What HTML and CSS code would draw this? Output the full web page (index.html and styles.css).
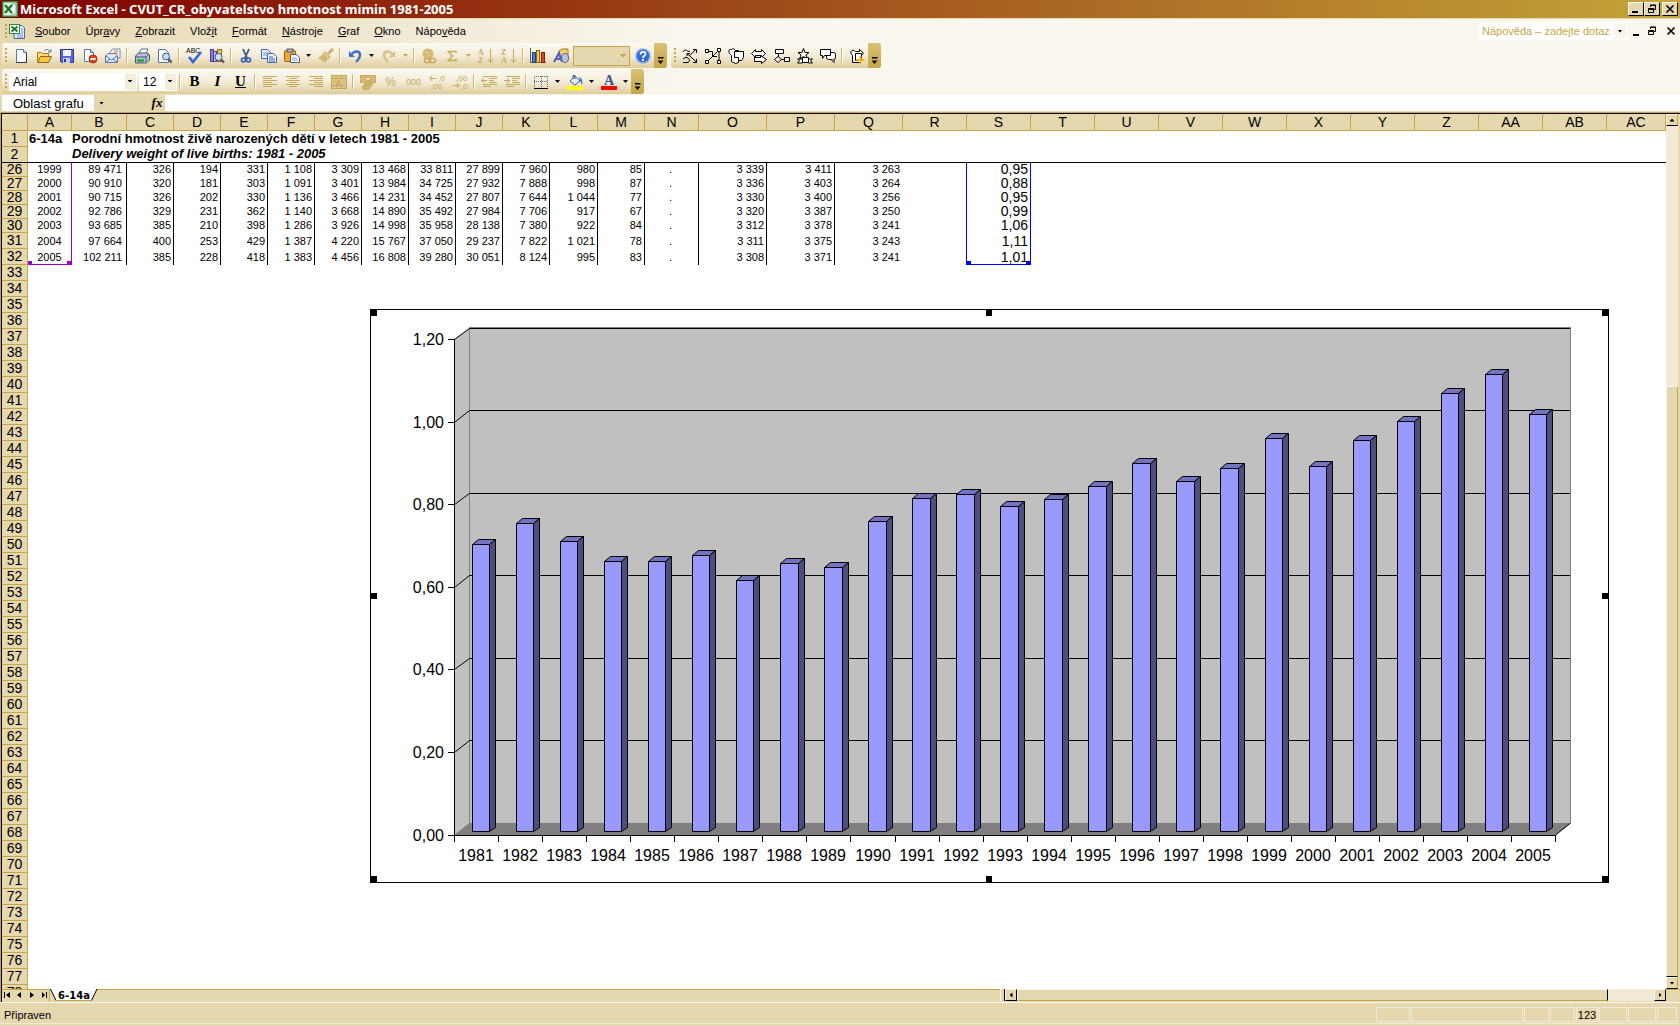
FILE: index.html
```html
<!DOCTYPE html>
<html lang="cs">
<head>
<meta charset="utf-8">
<title>Microsoft Excel - CVUT_CR_obyvatelstvo hmotnost mimin 1981-2005</title>
<link rel="stylesheet" href="styles.css">
</head>
<body>
<header class="titlebar">
  <svg class="ico" viewBox="0 0 16 16"><rect width="16" height="16" rx="1" fill="#2f8a3c"/><rect x="1.500" y="1.500" width="13" height="13" fill="#e9f3e6"/><path d="M9 3h5v10H9" fill="#fff" stroke="#6fae74"/><path d="M3 4l7 8M10 4l-7 8" stroke="#1c7a2d" stroke-width="2.400"/></svg>
  <h1>Microsoft Excel - CVUT_CR_obyvatelstvo hmotnost mimin 1981-2005</h1>
  <div class="winbtns">
    <button aria-label="Minimalizovat"><svg viewBox="0 0 12 10"><path d="M2 8h6" stroke="#000" stroke-width="2"/></svg></button>
    <button aria-label="Obnovit"><svg viewBox="0 0 12 10"><path d="M4.500 3V1.500h5v4H8M2.500 5.500h5v3h-5zM2 4.500h6M4 1h6" fill="none" stroke="#000"/></svg></button>
    <button class="close" aria-label="Zavřít"><svg viewBox="0 0 12 10"><path d="M2.500 1.500l7 7M9.500 1.500l-7 7" stroke="#000" stroke-width="1.600"/></svg></button>
  </div>
</header>

<div class="chrome">
  <nav class="menubar">
    <span class="grip"></span>
    <svg class="ico docico" viewBox="0 0 16 16"><path d="M5 2.500h8l2.500 2.500v10.500H5z" fill="#dce8fb" stroke="#4568a8"/><path d="M8 12h6M8 14h6M12 6h2M12 8h2M12 10h2" stroke="#7d9bd0"/><rect x=".5" y="1.500" width="10" height="9" fill="#fff" stroke="#2f8a3c"/><path d="M2.500 3.500l6 5M8.500 3.500l-6 5" stroke="#1c7a2d" stroke-width="2"/></svg>
    <div class="menus">
      <button><u>S</u>oubor</button><button>Úpr<u>a</u>vy</button><button><u>Z</u>obrazit</button><button>Vlož<u>i</u>t</button><button><u>F</u>ormát</button><button><u>N</u>ástroje</button><button><u>G</u>raf</button><button><u>O</u>kno</button><button>Nápo<u>v</u>ěda</button>
    </div>
    <label class="ask"><input type="text" placeholder="Nápověda – zadejte dotaz" aria-label="Nápověda"><span class="askarrow"><i class="dn"></i></span></label>
    <div class="docbtns">
      <button aria-label="Minimalizovat sešit"><svg viewBox="0 0 12 10"><path d="M3 9h6" stroke="#000" stroke-width="2"/></svg></button>
      <button aria-label="Obnovit sešit"><svg viewBox="0 0 12 10"><path d="M4.500 3V1.500h5v4H8M2.500 5.500h5v3h-5zM2 4.500h6M4 1h6" fill="none" stroke="#000"/></svg></button>
      <button class="close" aria-label="Zavřít sešit"><svg viewBox="0 0 12 10"><path d="M2.500 1.500l7 7M9.500 1.500l-7 7" stroke="#000" stroke-width="1.600"/></svg></button>
    </div>
  </nav>

  <div class="bars">
    <div class="toolbar">
      <span class="grip"></span>
      <button aria-label="Nový"><svg class="ico" viewBox="0 0 16 16"><path d="M3.500 1.500h7l3 3v10h-10z" fill="#fff" stroke="#5a76a8"/><path d="M13.500 4.500v10h-10" fill="none" stroke="#20355e"/><path d="M10.500 1.500v3h3" fill="#c9d8f0" stroke="#5a76a8"/></svg></button>
      <button aria-label="Otevřít"><svg class="ico" viewBox="0 0 16 16"><path d="M1.500 13.500v-9h4l1 1h6v3" fill="#f6d874" stroke="#a87a1c"/><path d="M1.500 14.500l3-6h11l-3 6z" fill="#fbc440" stroke="#8f6516"/><path d="M8 3c2-2.500 5-2 6 1M12 4h3V1" fill="none" stroke="#5c7ba8"/></svg></button>
      <button aria-label="Uložit"><svg class="ico" viewBox="0 0 16 16"><path d="M1.500 1.500h13v13h-12l-1-1z" fill="#5a66d8" stroke="#2c2f96"/><rect x="4" y="2" width="8" height="6" fill="#eef2fc"/><rect x="4" y="10" width="7" height="5" fill="#c5cbe8"/><rect x="5" y="11" width="2" height="3" fill="#2c2f96"/></svg></button>
      <button aria-label="Oprávnění"><svg class="ico" viewBox="0 0 16 16"><path d="M2.500 1.500h6l3 3v9h-9z" fill="#fff" stroke="#5a76a8"/><path d="M8.500 1.500v3h3" fill="#c9d8f0" stroke="#5a76a8"/><circle cx="11" cy="11" r="4" fill="#e0441c" stroke="#a82c0c"/><path d="M8.500 11h5" stroke="#fff" stroke-width="2"/></svg></button>
      <button aria-label="E-mail"><svg class="ico" viewBox="0 0 16 16"><path d="M4.500 5l3-4h7.500v9H6z" fill="#fff" stroke="#7288ac"/><path d="M9 3h4M9 5h4" stroke="#e06a3a"/><path d="M.5 7.500l3-2h7l2 2v7H.5z" fill="#dfe8f6" stroke="#5a76a8"/><path d="M1 8l5.500 4L12 8M1 14l4-3M12 14l-4-3" fill="none" stroke="#5a76a8"/></svg></button>
      <span class="sep"></span>
      <button aria-label="Tisk"><svg class="ico" viewBox="0 0 16 16"><path d="M5 6l2-5h7l-2 5z" fill="#fff" stroke="#5f7498"/><path d="M1.500 8l3-3h9l2 2v5l-3 3h-11z" fill="#b9c4d8" stroke="#44546e"/><path d="M2 9h10l3-3M12 9v5" fill="none" stroke="#44546e"/><path d="M3 12.500h7" stroke="#1fa32e" stroke-width="2.400"/></svg></button>
      <button aria-label="Náhled"><svg class="ico" viewBox="0 0 16 16"><path d="M1.500 1.500h7l3 3v10h-10z" fill="#fff" stroke="#5a76a8"/><circle cx="9" cy="8.500" r="3.500" fill="#bfe0f5" stroke="#3f5c8c"/><path d="M11.500 11l3 3.500" stroke="#54545c" stroke-width="2.400"/></svg></button>
      <span class="sep"></span>
      <button aria-label="Pravopis"><svg class="ico" viewBox="0 0 16 16"><text x="0" y="5" font-family="Liberation Sans, sans-serif" font-size="7">ABC</text><path d="M3 9l4 5 8-10" fill="none" stroke="#2f6bd8" stroke-width="2.600"/></svg></button>
      <button aria-label="Zdroje informací"><svg class="ico" viewBox="0 0 16 16"><rect x="1.500" y="1.500" width="3" height="12" fill="#8a7fd6" stroke="#4a3f9a"/><rect x="4.500" y="3.500" width="3" height="10" fill="#c9b0e6" stroke="#4a3f9a"/><rect x="8.500" y="1.500" width="4" height="12" fill="#e8c85a" stroke="#8f6516"/><circle cx="9.500" cy="9" r="3.500" fill="#cfe6f7" stroke="#3f5c8c"/><path d="M12 11.500l3 3" stroke="#54545c" stroke-width="2.400"/></svg></button>
      <span class="sep"></span>
      <button aria-label="Vyjmout"><svg class="ico" viewBox="0 0 16 16"><path d="M5 1l4 9M11 1L7 10" stroke="#40587e" stroke-width="1.800"/><circle cx="5.500" cy="12" r="2" fill="none" stroke="#2c5fc0" stroke-width="1.600"/><circle cx="10.500" cy="12" r="2" fill="none" stroke="#2c5fc0" stroke-width="1.600"/></svg></button>
      <button aria-label="Kopírovat"><svg class="ico" viewBox="0 0 16 16"><path d="M.5 1.500h6l3 3v6h-9z" fill="#e8f0fc" stroke="#3f66b0"/><path d="M2 5h5M2 7h5" stroke="#7d9bd0"/><path d="M6.500 5.500h6l3 3v6h-9z" fill="#e8f0fc" stroke="#3f66b0"/><path d="M8 9h4M8 11h6M8 13h6" stroke="#3f66b0"/></svg></button>
      <button aria-label="Vložit"><svg class="ico" viewBox="0 0 16 16"><rect x=".5" y="2.500" width="11" height="11" rx="1" fill="#f2a92e" stroke="#8f6516"/><rect x="3" y="1" width="6" height="3" fill="#b8b8c0" stroke="#5a5a66"/><path d="M6.500 6.500h6l3 3v5h-9z" fill="#fff" stroke="#4a5a80"/><path d="M8 10h5M8 12h6" stroke="#7d9bd0"/></svg></button>
      <button class="drop" aria-label="Možnosti vložení"><i class="dn"></i></button>
      <button aria-label="Kopírovat formát"><svg class="ico" viewBox="0 0 16 16"><path d="M15 1l-5 5" stroke="#cdb06a" stroke-width="3"/><path d="M7 4l5 5-2 2-5-5z" fill="#e0cb92" stroke="#c8a95c"/><path d="M5 6l5 5-3 4-7-5z" fill="#d3b878"/></svg></button>
      <span class="sep"></span>
      <button aria-label="Zpět"><svg class="ico" viewBox="0 0 16 16"><path d="M5 6c3-4 8-3 8 1 0 3-2 5-4 7" fill="none" stroke="#3a6fd0" stroke-width="2.400"/><path d="M2 3v6h6z" fill="#3a6fd0"/></svg></button>
      <button class="drop" aria-label="Seznam zpět"><i class="dn"></i></button>
      <button aria-label="Znovu"><svg class="ico" viewBox="0 0 16 16"><path d="M11 6C8 2 3 3 3 7c0 3 2 5 4 7" fill="none" stroke="#d8c086" stroke-width="2.400"/><path d="M14 3v6H8z" fill="#d8c086"/></svg></button>
      <button class="drop" aria-label="Seznam znovu"><i class="dn off"></i></button>
      <span class="sep"></span>
      <button aria-label="Hypertextový odkaz"><svg class="ico" viewBox="0 0 16 16"><circle cx="7" cy="6" r="5.500" fill="#d3b878"/><path d="M3 5c2-2 3 2 5-1M5 9l4-2" stroke="#e8d8ac" fill="none"/><rect x="3.500" y="10.500" width="6" height="4" rx="2" fill="none" stroke="#c8a95c" stroke-width="1.600"/><rect x="8.500" y="10.500" width="6" height="4" rx="2" fill="none" stroke="#c8a95c" stroke-width="1.600"/></svg></button>
      <button aria-label="Automatické shrnutí"><svg class="ico" viewBox="0 0 16 16"><path d="M12 5V3.500H4.500L8.500 8l-4 4.500H12V11" fill="none" stroke="#c8a95c" stroke-width="1.600"/></svg></button>
      <button class="drop" aria-label="Funkce"><i class="dn off"></i></button>
      <button aria-label="Seřadit vzestupně"><svg class="ico sort" viewBox="0 0 16 16"><text x="0" y="7">A</text><text x="0" y="15">Z</text><path d="M12.500 1v13M10 11l2.500 3.500L15 11"/></svg></button>
      <button aria-label="Seřadit sestupně"><svg class="ico sort" viewBox="0 0 16 16"><text x="0" y="7">Z</text><text x="0" y="15">A</text><path d="M12.500 1v13M10 11l2.500 3.500L15 11"/></svg></button>
      <span class="sep"></span>
      <button aria-label="Průvodce grafem"><svg class="ico" viewBox="0 0 16 16"><path d="M.5 0v14.500H16" fill="none" stroke="#5a5a66"/><rect x="2.500" y="4.500" width="3" height="10" fill="#4a7be0" stroke="#20407e"/><rect x="6.500" y="2.500" width="3" height="12" fill="#f4ce4a" stroke="#8f6516"/><rect x="11.500" y="4.500" width="3" height="10" fill="#e0441c" stroke="#80220a"/></svg></button>
      <button aria-label="Kreslení"><svg class="ico" viewBox="0 0 16 16"><path d="M6 3l3-2h6v6l-3 2H6z" fill="#f2cf72" stroke="#a87a1c"/><ellipse cx="12" cy="10" rx="3.500" ry="4.500" fill="#b9c4d8" stroke="#55688c"/><path d="M1 14L6 5l3 9M3 11h5" fill="none" stroke="#5060c0" stroke-width="2"/></svg></button>
      <select class="zoombox" aria-label="Lupa" disabled><option></option></select>
      <button aria-label="Nápověda"><svg class="ico" viewBox="0 0 16 16"><circle cx="8" cy="8" r="7" fill="#2f6be0" stroke="#8fb0ea" stroke-width="1.600"/><path d="M5.500 6.500c0-3.500 5-3.500 5-.5C10.500 8 8 7.500 8 10" fill="none" stroke="#fff" stroke-width="1.800"/><rect x="7" y="11" width="2" height="2" fill="#fff"/></svg></button>
      <button class="more" aria-label="Možnosti panelu"><i class="dn"></i></button>
    </div>
    <div class="toolbar outline">
      <span class="grip"></span>
      <button aria-label="Čáry"><svg class="ico" viewBox="0 0 16 16"><path class="open" d="M1 4c3-5 4 1 7-1M15 14.500L5 5.500M14.500 11v3.500H11M5 8V5.500h3M7 8l7-6.500M11 1.500h3.500V5M1 14.500h5c3-2 1-5-2-5M1 11l3-2"/></svg></button>
      <button aria-label="Spojnice"><svg class="ico" viewBox="0 0 16 16"><path class="open" d="M3 3.500h4.500v5H12M14 4v8M3 13l9-9"/><path d="M.5 1.500h3v3h-3zM12.500.5h3v3h-3zM12.500 12.500h3v3h-3zM.5 12.500h3v3h-3z"/></svg></button>
      <button aria-label="Základní tvary"><svg class="ico" viewBox="0 0 16 16"><path d="M3.500 7.500c-4-3-3-7 0-6 1-1 3-1 4 1h3v12l-3 1-4-2z"/><path d="M6.500 3.500h9v6l-2 3h-3v-3h-4z"/></svg></button>
      <button aria-label="Plné šipky"><svg class="ico" viewBox="0 0 16 16"><path d="M.5 5.500l4-4v2h6v-2l4 4-4 4v-2h-6v2z"/><path d="M3.500 9.500h6v-2l6 4-5 4v-2h-7z"/></svg></button>
      <button aria-label="Vývojové diagramy"><svg class="ico" viewBox="0 0 16 16"><path d="M1.500 1.500h8v4h-8zM4.500 6v3M4 8.500l3.500 3-3.500 3-3.500-3zM10.500 9.500h5v4h-5zM7 11.500h3"/></svg></button>
      <button aria-label="Hvězdy a nápisy"><svg class="ico" viewBox="0 0 16 16"><path d="M5.500 11H.5l2 2-2 2h5M11.500 11h4l-2 2 2 2h-4"/><path d="M6.500.5l1.500 4h4L9 7l1.500 4-4-2.500-4 2.500L4 7 1 4.500h4z"/><path d="M5.500 9.500h6v5h-6z"/></svg></button>
      <button aria-label="Popisky"><svg class="ico" viewBox="0 0 16 16"><rect x="6.500" y="4.500" width="9" height="7" rx="2"/><path d="M11 11.500l3 3v-3"/><path d="M.5 1.500h10v6h-6l-2 3v-3h-2z"/></svg></button>
      <span class="sep"></span>
      <button aria-label="Další tvary"><svg class="ico" viewBox="0 0 16 16"><path d="M3.500 14.500v-7c-4-4 0-7 3-4h4V1.500l4 3.500-3 3v6.500z"/><path d="M6.500 5.500h6v5l-3 2h-3z"/><path class="plus" d="M11.500 8v8M7.500 12h8"/></svg></button>
      <button class="more" aria-label="Možnosti panelu"><i class="dn"></i></button>
    </div>
  </div>

  <div class="bars">
    <div class="toolbar">
      <span class="grip"></span>
      <select class="font" aria-label="Písmo"><option>Arial</option></select>
      <select class="size" aria-label="Velikost"><option>12</option></select>
      <span class="sep"></span>
      <button class="ltr" aria-label="Tučné"><b>B</b></button>
      <button class="ltr" aria-label="Kurzíva"><b><i>I</i></b></button>
      <button class="ltr" aria-label="Podtržené"><b><u>U</u></b></button>
      <span class="sep"></span>
      <button aria-label="Vlevo"><svg class="ico dim" viewBox="0 0 16 16"><path d="M1 2.500h14M1 4.500h9M1 6.500h14M1 8.500h9M1 10.500h14M1 12.500h9"/></svg></button>
      <button aria-label="Na střed"><svg class="ico dim" viewBox="0 0 16 16"><path d="M1 2.500h14M4 4.500h8M1 6.500h14M4 8.500h8M1 10.500h14M4 12.500h8"/></svg></button>
      <button aria-label="Vpravo"><svg class="ico dim" viewBox="0 0 16 16"><path d="M1 2.500h14M6 4.500h9M1 6.500h14M6 8.500h9M1 10.500h14M6 12.500h9"/></svg></button>
      <button aria-label="Sloučit"><svg class="ico dim" viewBox="0 0 16 16"><rect x=".5" y="1.500" width="15" height="13" fill="#dcc68c"/><path d="M1 4.500h14M1 11.500h14M5.500 2v2M10.500 2v2M5.500 12v2M10.500 12v2M2 8h2M12 8h2"/><text x="5" y="11" font-size="9" font-weight="bold">a</text></svg></button>
      <span class="sep"></span>
      <button aria-label="Měna"><svg class="ico dim" viewBox="0 0 16 16"><rect x=".5" y="1.500" width="15" height="7" fill="#d3b878"/><ellipse cx="8" cy="5" rx="3" ry="2" fill="#e8d8ac"/><ellipse cx="9" cy="9" rx="4" ry="2" fill="#d3b878"/><ellipse cx="8" cy="11" rx="4" ry="2" fill="#d3b878"/><ellipse cx="6" cy="13.500" rx="4" ry="2" fill="#d3b878"/></svg></button>
      <button class="num" aria-label="Procenta">%</button>
      <button class="num small" aria-label="Oddělovač">000</button>
      <button aria-label="Přidat místo"><svg class="ico dim" viewBox="0 0 16 16"><path d="M1 4.500h6M3 2L1 4.500 3 7"/><text x="9" y="7" font-size="8">,0</text><text x="2" y="15" font-size="8">,00</text></svg></button>
      <button aria-label="Odebrat místo"><svg class="ico dim" viewBox="0 0 16 16"><path d="M1 11.500h6M5 9l2 2.500L5 14"/><text x="4" y="7" font-size="8">,00</text><text x="9" y="15" font-size="8">,0</text></svg></button>
      <span class="sep"></span>
      <button aria-label="Zmenšit odsazení"><svg class="ico dim" viewBox="0 0 16 16"><path d="M2 2.500h14M8 4.500h8M8 6.500h5M8 8.500h8M2 10.500h14M2 12.500h8M0 6.500h6M3 4L.5 6.500 3 9"/></svg></button>
      <button aria-label="Zvětšit odsazení"><svg class="ico dim" viewBox="0 0 16 16"><path d="M2 2.500h14M8 4.500h8M8 6.500h5M8 8.500h8M2 10.500h14M2 12.500h8M0 6.500h6M3 4l2.500 2.500L3 9"/></svg></button>
      <span class="sep"></span>
      <button aria-label="Ohraničení"><svg class="ico" viewBox="0 0 16 16"><path d="M1.500 2v11M8.500 2v11M14.500 2v11M1 2.500h14M1 7.500h14" stroke="#55688c" stroke-dasharray="1 1"/><path d="M1 14.500h14" stroke="#000"/></svg></button>
      <button class="drop" aria-label="Styly ohraničení"><i class="dn"></i></button>
      <button aria-label="Barva výplně"><svg class="ico" viewBox="0 0 16 16"><path d="M3 7l5-5 5 5-5 4z" fill="#dfe8f6" stroke="#3f5c8c"/><path d="M6 5V1.500h2V5" fill="none" stroke="#3f5c8c"/><path d="M12 3c3 1 4 4 3 8l-2-4z" fill="#3f7bd0"/><rect y="12" width="16" height="4" fill="#ff0"/></svg></button>
      <button class="drop" aria-label="Barvy výplně"><i class="dn"></i></button>
      <button aria-label="Barva písma"><svg class="ico" viewBox="0 0 16 16"><text x="3" y="11" font-family="Liberation Serif, serif" font-weight="bold" font-size="14" fill="#33508c">A</text><rect y="12" width="16" height="4" fill="#f00"/></svg></button>
      <button class="drop" aria-label="Barvy písma"><i class="dn"></i></button>
      <button class="more" aria-label="Možnosti panelu"><i class="dn"></i></button>
    </div>
  </div>
</div>

<div class="formulabar">
  <input class="namebox" aria-label="Pole názvů" value="Oblast grafu">
  <button class="namedrop" aria-label="Názvy"><i class="dn"></i></button>
  <button class="fx" aria-label="Vložit funkci"><i>fx</i></button>
  <input class="formula" aria-label="Řádek vzorců">
</div>

<main class="workbook">
  <div class="pane">
    <table class="sheet">
      <colgroup id="cols"></colgroup>
      <thead><tr id="letters"></tr></thead>
      <tbody id="rows">
        <tr class="t1"><th>1</th><td>6-14a</td><td colspan="28">Porodní hmotnost živě narozených dětí v letech 1981 - 2005</td></tr>
        <tr class="t2"><th>2</th><td></td><td colspan="28">Delivery weight of live births: 1981 - 2005</td></tr>
      </tbody>
    </table>
    <svg class="chart" viewBox="370 309 1239 574" width="1239" height="574" role="img" aria-label="Sloupcový graf">
      <rect x="370.500" y="309.500" width="1238" height="573" fill="#fff" stroke="#000"/>
      <path d="M454 339L469 328V823L454 835z" fill="#c0c0c0"/>
      <rect x="469" y="327" width="1102" height="496" fill="#c0c0c0"/>
      <path d="M454 835L469 823H1571L1556 835z" fill="#808080"/>
      <path d="M469.500 823V327.500H1570.500V823" fill="none" stroke="#808080"/>
      <path d="M1555.500 835L1570.500 823" stroke="#000"/>
      <g id="plot"></g>
      <path d="M370 309h7v7h-7zM986 309h6v7h-6zM1602 309h7v7h-7zM370 593h7v6h-7zM1602 593h7v6h-7zM370 876h7v7h-7zM986 876h6v7h-6zM1602 876h7v7h-7z"/>
    </svg>
  </div>
  <div class="vscroll">
    <button aria-label="Nahoru"><i class="tri u"></i></button>
    <div class="vtrack"></div>
    <div class="vthumb"></div>
    <button aria-label="Dolů"><i class="tri d"></i></button>
  </div>
</main>

<div class="tabs">
  <div class="tabnav">
    <button aria-label="První list"><svg viewBox="0 0 12 12"><path d="M2.500 3v6" stroke="#000"/><path d="M8 3v6L4 6z"/></svg></button>
    <button aria-label="Předchozí list"><svg viewBox="0 0 12 12"><path d="M7 3v6L3 6z"/></svg></button>
    <button aria-label="Další list"><svg viewBox="0 0 12 12"><path d="M4 3v6l4-3z"/></svg></button>
    <button aria-label="Poslední list"><svg viewBox="0 0 12 12"><path d="M8.500 3v6" stroke="#000"/><path d="M4 3v6l3-3z"/></svg></button>
  </div>
  <button class="tab"><svg viewBox="0 0 48 13" aria-hidden="true"><path d="M0 0L6 11H41L47 0z" fill="#fff"/><path d="M0.500 0L6 11.500M41.500 11.500L47 0" stroke="#000" fill="none"/><path d="M6 11.500h35" stroke="#c6a646"/></svg><span>6-14a</span></button>
  <div class="hscroll">
    <span class="split"></span>
    <button aria-label="Vlevo"><i class="tri l"></i></button>
    <div class="hthumb"></div>
    <div class="htrack"></div>
    <button aria-label="Vpravo"><i class="tri r"></i></button>
  </div>
</div>

<footer class="status">
  <span class="ready">Připraven</span>
  <span class="f w34"></span><span class="f w112"></span><span class="f w25"></span><span class="f w25"></span><span class="f w22">123</span><span class="f w28"></span><span class="f w28"></span><span class="f w20"></span>
</footer>
<script src="sheet.js"></script>
</body>
</html>
```
FILE: styles.css
```css
* { box-sizing: border-box; }
html, body { height: 100%; }
body {
  margin: 0;
  display: flex;
  flex-direction: column;
  overflow: hidden;
  background: #e5d7ae;
  font: 11px "Liberation Sans", Arial, sans-serif;
  color: #000;
}
button, input, select {
  font: inherit;
  color: inherit;
  border: 0;
  margin: 0;
  padding: 0;
  background: none;
  border-radius: 0;
  appearance: none;
  outline: 0;
}
button { display: flex; align-items: center; justify-content: center; flex: none; }
svg { display: block; }
.ico { width: 16px; height: 16px; flex: none; }

/* title bar */
.titlebar {
  flex: none;
  height: 18px;
  display: flex;
  align-items: center;
  padding: 0 2px;
  background: linear-gradient(90deg, #800000, #c4a438);
}
.titlebar h1 {
  margin: 0 0 0 2px;
  flex: 1;
  font: bold 13px/18px "Noto Sans", "DejaVu Sans", sans-serif;
  color: #fff;
  white-space: nowrap;
}
.winbtns { display: flex; }
.winbtns button {
  width: 16px;
  height: 14px;
  background: #e5d7ae;
  border: 1px solid;
  border-color: #f9f6ee #000 #000 #f9f6ee;
}
.winbtns .close { margin-left: 2px; }
.winbtns svg, .docbtns svg { width: 12px; height: 10px; }

/* menu and toolbars */
.chrome {
  flex: none;
  border-top: 1px solid #e5d7ae;
  background: linear-gradient(90deg, #e5d7ae, #f9f6ee 680px);
}
.menubar { height: 24px; display: flex; align-items: center; padding-left: 3px; }
.grip {
  width: 7px;
  height: 15px;
  flex: none;
  background: repeating-linear-gradient(#c6a646 0 2px, transparent 2px 4px) 3px 0 / 2px 100% no-repeat;
}
.menubar .grip { width: 6px; background-position-x: 2px; }
.docico { margin-right: 2px; }
.menus { display: flex; flex: 1; }
.menus button { padding: 0 7px 0 8px; height: 20px; white-space: pre; }
.ask { display: flex; width: 148px; height: 18px; padding: 1px; background: #fff; }
.ask input { flex: 1; min-width: 0; padding-left: 2px; }
.ask input::placeholder { color: #c6a646; opacity: 1; }
.askarrow { width: 12px; display: flex; align-items: center; justify-content: center; background: #f9f6ee; }
.docbtns { display: flex; gap: 4px; padding: 0 3px; }
.docbtns .close { margin-left: 3px; }
.bars { display: flex; gap: 4px; padding: 0 2px 1px; }
.toolbar {
  display: flex;
  align-items: center;
  height: 25px;
  border-radius: 3px;
  background: linear-gradient(#fbf9f2, #f3ecd8 50%, #dfcd9c);
}
.toolbar button { width: 23px; height: 23px; }
.toolbar .drop { width: 11px; }
.toolbar .more {
  width: 13px;
  height: 25px;
  align-items: flex-end;
  padding-bottom: 4px;
  border-radius: 0 3px 3px 0;
  background: linear-gradient(#d8c078, #c6a646);
}
.sep { width: 6px; height: 15px; flex: none; background: linear-gradient(90deg, transparent 2px, #d3b96c 2px 3px, #fff 3px 4px, transparent 4px); }
.dn { width: 5px; height: 3px; background: #000; clip-path: polygon(0 0, 100% 0, 50% 100%); }
.more .dn { width: 6px; height: 7px; clip-path: polygon(0 0, 100% 0, 100% 20%, 0 20%, 0 50%, 100% 50%, 50% 100%, 0 50%); }
.dn.off { background: #c6a646; }
.sort text { font: bold 8px "Liberation Serif", serif; fill: #c8a95c; }
.sort path { fill: none; stroke: #c8a95c; }
.dim { fill: none; stroke: #c8a95c; }
.dim text { fill: #c8a95c; stroke: none; font-family: "Liberation Sans", sans-serif; }
.outline path, .outline rect { fill: #fff; stroke: #000; }
.outline .open { fill: none; }
.outline .plus { stroke: #f0b020; stroke-width: 2; }
.toolbar select {
  height: 18px;
  padding: 0 4px;
  background-color: #fff;
  background-image: conic-gradient(from -45deg at 50% 100%, #000 90deg, transparent 0), linear-gradient(#f3ecd8, #f3ecd8);
  background-position: right 4px center, right 1px center;
  background-size: 6px 3px, 11px 16px;
  background-repeat: no-repeat;
}
.toolbar .font { width: 128px; margin-right: 2px; font-size: 12px; }
.toolbar .size { width: 38px; font-size: 12px; }
.toolbar .zoombox {
  width: 57px;
  height: 20px;
  margin: 0 1px;
  border: 1px solid #c6a646;
  background-color: #e5d7ae;
  background-image: conic-gradient(from -45deg at 50% 100%, #c6a646 90deg, transparent 0);
  background-size: 6px 3px;
  background-position: right 3px center;
  opacity: 1;
}
.toolbar .ltr { font-family: "Liberation Serif", serif; font-size: 15px; }
.toolbar .num { color: #c8a95c; font-size: 12px; }
.toolbar .small { font-size: 9px; }

/* formula bar */
.formulabar { flex: none; height: 17px; display: flex; padding-left: 2px; border-bottom: 1px solid #e5d7ae; }
.namebox { width: 92px; padding-left: 11px; background: #fff; font-size: 13px; }
.namedrop { width: 15px; }
.fx { width: 56px; padding-left: 40px; font: bold 13px "Liberation Serif", serif; }
.formula { flex: 1; min-width: 0; background: #fff; }

/* worksheet */
.workbook {
  flex: 1;
  min-height: 0;
  display: flex;
  border-top: 1px solid #c6a646;
  border-left: 1px solid #c6a646;
  box-shadow: inset 1px 1px 0 #000;
  padding: 1px 2px 0 1px;
}
.pane { position: relative; flex: 1; min-width: 0; overflow: hidden; background: #fff; }
.sheet { width: 100%; table-layout: fixed; border-collapse: separate; border-spacing: 0; }
.sheet th {
  height: 16px;
  padding: 0;
  background: #e5d7ae;
  border-right: 1px solid #c6a646;
  border-bottom: 1px solid #c6a646;
  font: 14px/15px "Liberation Sans", Arial, sans-serif;
}
.sheet thead th { height: 17px; line-height: 16px; }
.sheet td { height: 16px; padding: 0 3px 1px 0; line-height: 14px; text-align: right; vertical-align: bottom; white-space: nowrap; }
.sheet .short th, .sheet .short td { height: 14px; line-height: 13px; }
.sheet .ln { border-right: 1px solid #000; padding-right: 2px; }
.sheet .mid { text-align: center; }
.sheet .colA { text-align: center; padding-right: 0; border-right: 1px solid #9900cc; }
.sheet .colB { padding-right: 4px; }
.sheet .colR { border-right: 1px solid #00f; }
.sheet .colS { border-right: 1px solid #00f; padding-right: 2px; font-size: 14px; }
.sheet .last .colA, .sheet .last .colS {
  padding-bottom: 0;
  border-bottom: 1px solid;
  background-repeat: no-repeat;
  background-size: 4px 3px;
  background-position: left bottom, right bottom;
}
.sheet .last .colA { border-bottom-color: #9900cc; background-image: linear-gradient(#9900cc, #9900cc), linear-gradient(#9900cc, #9900cc); }
.sheet .last .colS { border-bottom-color: #00f; background-image: linear-gradient(#00f, #00f), linear-gradient(#00f, #00f); }
.t1 td, .t2 td { font-weight: bold; font-size: 13px; }
.sheet .t1 td, .sheet .t2 td { text-align: left; padding: 0 0 1px; }
.sheet .t2 td { font-style: italic; }
.sheet .t2 th, .sheet .t2 td { border-bottom: 1px solid #000; }
.sheet .t1 td:nth-child(2) { padding-left: 1px; }

.chart { position: absolute; left: 368px; top: 195px; }
.chart text { font: 16px "Liberation Sans", Arial, sans-serif; }

/* scroll bars */
.vscroll { width: 12px; flex: none; display: flex; flex-direction: column; background: #f2ead6; }
.vscroll button, .hscroll button {
  width: 12px;
  height: 12px;
  background: #e5d7ae;
  border: 1px solid;
  border-color: #f9f6ee #c6a646 #000 #f9f6ee;
}
.vtrack { flex: 261; }
.vthumb { flex: 590; background: #e5d7ae; border: 1px solid; border-color: #f9f6ee #c6a646 #000 #f9f6ee; }
.tri { background: #000; }
.tri.u, .tri.d { width: 5px; height: 3px; }
.tri.l, .tri.r { width: 3px; height: 5px; }
.tri.u { clip-path: polygon(50% 0, 100% 100%, 0 100%); }
.tri.d { clip-path: polygon(0 0, 100% 0, 50% 100%); }
.tri.l { clip-path: polygon(0 50%, 100% 0, 100% 100%); }
.tri.r { clip-path: polygon(0 0, 100% 50%, 0 100%); }
.tabs {
  flex: none;
  height: 13px;
  display: flex;
  border-left: 1px solid #c6a646;
  box-shadow: inset 1px 0 0 #000, inset 0 1px 0 #c6a646;
  padding-right: 14px;
}
.tabnav { display: flex; width: 49px; padding-left: 1px; border-right: 1px solid #c6a646; }
.tabnav button, .tabnav svg { width: 12px; height: 12px; }
.tab { position: relative; width: 48px; height: 13px; font: bold 10px/12px "DejaVu Sans", sans-serif; }
.tab svg { position: absolute; inset: 0; width: 48px; height: 13px; }
.tab span { position: relative; }
.hscroll { display: flex; width: 40%; height: 12px; margin-left: auto; background: #f2ead6; }
.hscroll button { border-right-color: #000; }
.split { width: 5px; background: #e5d7ae; border-left: 1px solid #f9f6ee; border-right: 1px solid #000; }
.hthumb { flex: 588; background: #e5d7ae; border: 1px solid; border-color: #f9f6ee #000 #c6a646 #f9f6ee; }
.htrack { flex: 46; }

/* status bar */
.status {
  flex: none;
  height: 24px;
  display: flex;
  gap: 1px;
  padding: 4px 3px 4px 4px;
  border-top: 1px solid #f9f6ee;
  background: linear-gradient(#f2ead6, #f2ead6) 0 20px / 100% 1px no-repeat;
}
.ready { flex: 1; line-height: 16px; }
.f { height: 15px; border: 1px solid #f2ead6; line-height: 14px; text-align: center; }
.w34 { width: 34px; }
.w112 { width: 112px; }
.w25 { width: 25px; }
.w22 { width: 22px; }
.w28 { width: 28px; }
.w20 { width: 20px; }
```
FILE: sheet.js
```js
const columns = [
  ["", 26], ["A", 44], ["B", 55], ["C", 47], ["D", 47], ["E", 47], ["F", 47], ["G", 47], ["H", 47],
  ["I", 47], ["J", 47], ["K", 47], ["L", 48], ["M", 47], ["N", 54], ["O", 68], ["P", 68], ["Q", 68],
  ["R", 64], ["S", 64], ["T", 64], ["U", 64], ["V", 64], ["W", 64], ["X", 64], ["Y", 64], ["Z", 64],
  ["AA", 64], ["AB", 64], ["AC", 0]
];
const cols = document.getElementById("cols");
const letters = document.getElementById("letters");
for (const [name, width] of columns) {
  const col = document.createElement("col");
  if (width) col.style.width = width + "px";
  cols.append(col);
  const th = document.createElement("th");
  th.textContent = name;
  letters.append(th);
}

const data = [
  "1999|89 471|326|194|331|1 108|3 309|13 468|33 811|27 899|7 960|980|85|.|3 339|3 411|3 263||0,95",
  "2000|90 910|320|181|303|1 091|3 401|13 984|34 725|27 932|7 888|998|87|.|3 336|3 403|3 264||0,88",
  "2001|90 715|326|202|330|1 136|3 466|14 231|34 452|27 807|7 644|1 044|77|.|3 330|3 400|3 256||0,95",
  "2002|92 786|329|231|362|1 140|3 668|14 890|35 492|27 984|7 706|917|67|.|3 320|3 387|3 250||0,99",
  "2003|93 685|385|210|398|1 286|3 926|14 998|35 958|28 138|7 380|922|84|.|3 312|3 378|3 241||1,06",
  "2004|97 664|400|253|429|1 387|4 220|15 767|37 050|29 237|7 822|1 021|78|.|3 311|3 375|3 243||1,11",
  "2005|102 211|385|228|418|1 383|4 456|16 808|39 280|30 051|8 124|995|83|.|3 308|3 371|3 241||1,01"
];
const rows = document.getElementById("rows");
for (let n = 26; n <= 78; n++) {
  const tr = document.createElement("tr");
  if (n <= 30) tr.className = "short";
  if (n === 32) tr.className = "last";
  const th = document.createElement("th");
  th.textContent = n;
  tr.append(th);
  const line = data[n - 26];
  if (line) {
    line.split("|").forEach((value, i) => {
      const td = document.createElement("td");
      const letter = columns[i + 1][0];
      td.textContent = value;
      td.className = "col" + letter;
      if (i >= 1 && i <= 15) td.classList.add("ln");
      if (letter === "N") td.classList.add("mid");
      tr.append(td);
    });
  }
  rows.append(tr);
}

const NS = "http://www.w3.org/2000/svg";
const plot = document.getElementById("plot");
function add(name, attrs, text) {
  const el = document.createElementNS(NS, name);
  for (const key in attrs) el.setAttribute(key, attrs[key]);
  if (text) el.textContent = text;
  plot.append(el);
}

// axes and grid lines
[["1,20", 339, 328], ["1,00", 422, 410], ["0,80", 504, 493], ["0,60", 587, 575], ["0,40", 669, 658], ["0,20", 752, 740]]
  .forEach(([label, front, back]) => {
    add("path", { d: `M454.500 ${front + 0.5}L469.500 ${back + 0.5}H1570`, fill: "none", stroke: "#000" });
    add("path", { d: `M448 ${front + 0.5}H454`, stroke: "#000" });
    add("text", { x: 444, y: front + 6, "text-anchor": "end" }, label);
  });
add("text", { x: 444, y: 841, "text-anchor": "end" }, "0,00");
add("path", { d: "M454.500 339V842M448 835.500H1556", fill: "none", stroke: "#000" });

// front edge of the top of each column, 1981 to 2005
const tops = [544, 523, 541, 561, 561, 555, 580, 563, 567, 521, 498, 494, 506, 499, 486, 463, 481, 468, 438, 466, 440, 421, 393, 374, 414];
tops.forEach((top, i) => {
  const x = 472.5 + 44 * i + (i >= 18 ? 1 : 0);
  const w = i >= 7 && i < 18 ? 18 : 17;
  const y = top + 0.5;
  const mid = 476 + 44 * i + (i >= 9 ? 1 : 0);
  const line = { stroke: "#000", "stroke-width": 1, "stroke-linejoin": "round" };
  add("path", { d: `M${x} ${y}l6 -5h${w}l-6 5z`, fill: "#7373bf", ...line });
  add("path", { d: `M${x + w} ${y}l6 -5V827.500l-6 4z`, fill: "#4d4d80", ...line });
  add("path", { d: `M${x} ${y}h${w}V831.500h-${w}z`, fill: "#9999ff", ...line });
  add("text", { x: mid, y: 861, "text-anchor": "middle" }, String(1981 + i));
  add("path", { d: `M${mid + 22.5} 836v6`, stroke: "#000" });
});
```
